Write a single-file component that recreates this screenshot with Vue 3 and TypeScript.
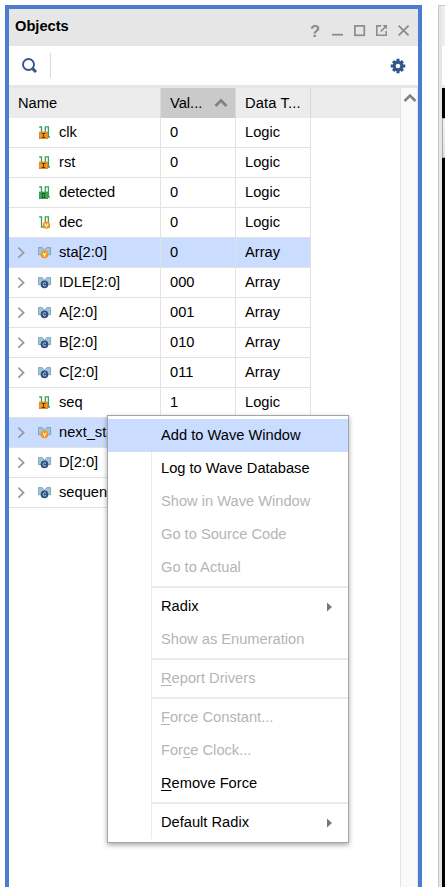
<script setup lang="ts">
type IconKind = 'in' | 'out' | 'wireVar' | 'busVar' | 'busConst'

interface SignalRow {
  name: string
  value: string
  type: string
  icon: IconKind
  selected?: boolean
}

interface MenuItem {
  before?: string
  key?: string
  after: string
  disabled?: boolean
  submenu?: boolean
  active?: boolean
}

const rows: SignalRow[] = [
  { name: 'clk', value: '0', type: 'Logic', icon: 'in' },
  { name: 'rst', value: '0', type: 'Logic', icon: 'in' },
  { name: 'detected', value: '0', type: 'Logic', icon: 'out' },
  { name: 'dec', value: '0', type: 'Logic', icon: 'wireVar' },
  { name: 'sta[2:0]', value: '0', type: 'Array', icon: 'busVar', selected: true },
  { name: 'IDLE[2:0]', value: '000', type: 'Array', icon: 'busConst' },
  { name: 'A[2:0]', value: '001', type: 'Array', icon: 'busConst' },
  { name: 'B[2:0]', value: '010', type: 'Array', icon: 'busConst' },
  { name: 'C[2:0]', value: '011', type: 'Array', icon: 'busConst' },
  { name: 'seq', value: '1', type: 'Logic', icon: 'in' },
  { name: 'next_sta', value: '', type: '', icon: 'busVar', selected: true },
  { name: 'D[2:0]', value: '', type: '', icon: 'busConst' },
  { name: 'sequen', value: '', type: '', icon: 'busConst' },
]

const menuGroups: MenuItem[][] = [
  [
    { after: 'Add to Wave Window', active: true },
    { after: 'Log to Wave Database' },
    { after: 'Show in Wave Window', disabled: true },
    { after: 'Go to Source Code', disabled: true },
    { after: 'Go to Actual', disabled: true },
  ],
  [
    { after: 'Radix', submenu: true },
    { after: 'Show as Enumeration', disabled: true },
  ],
  [{ key: 'R', after: 'eport Drivers', disabled: true }],
  [
    { key: 'F', after: 'orce Constant...', disabled: true },
    { before: 'For', key: 'c', after: 'e Clock...', disabled: true },
    { key: 'R', after: 'emove Force' },
  ],
  [{ after: 'Default Radix', submenu: true }],
]

const isBus = (icon: IconKind): boolean => icon === 'busVar' || icon === 'busConst'
</script>

<template>
  <div class="screen">
    <section class="panel">
      <header class="titlebar">
        <h1 class="title">Objects</h1>
        <div class="window-buttons">
          <span class="help">?</span>
          <svg width="12" height="14" viewBox="0 0 12 14"><path d="M0 11.7H11" stroke="#8c8c8c" stroke-width="1.8" /></svg>
          <svg width="12" height="14" viewBox="0 0 12 14"><rect x="0.9" y="2.9" width="9.4" height="9.4" fill="none" stroke="#8c8c8c" stroke-width="1.7" /></svg>
          <svg width="12" height="14" viewBox="0 0 12 14" fill="none" stroke="#8c8c8c" stroke-width="1.6"><path d="M5.2 2.9H0.8V12.3H10.2V8M4.8 8.4L9 4.2" /><path d="M6.5 2.1H11V6.6Z" fill="#8c8c8c" stroke="none" /></svg>
          <svg width="12" height="14" viewBox="0 0 12 14"><path d="M0.6 2.6L10.6 12.4M10.6 2.6L0.6 12.4" stroke="#8c8c8c" stroke-width="1.8" /></svg>
        </div>
      </header>

      <div class="toolbar">
        <svg class="search" width="16" height="16" viewBox="0 0 16 16" fill="none" stroke="#33548c">
          <circle cx="6.5" cy="6.5" r="5.5" stroke-width="1.9" />
          <path d="M10.6 10.6L14 14" stroke-width="3" />
        </svg>
        <span class="divider"></span>
        <svg class="gear" width="16" height="16" viewBox="-8 -8 16 16">
          <g stroke="#33548c" stroke-width="3.1">
            <path d="M0-7.3V7.3M-7.3 0H7.3" />
            <path d="M-4.9-4.9L4.9 4.9M4.9-4.9L-4.9 4.9" />
          </g>
          <circle r="5.4" fill="#33548c" />
          <circle r="2.3" fill="#fff" />
        </svg>
      </div>

      <div class="content">
        <div class="table">
          <div class="head">
            <div class="cell name-col">Name</div>
            <div class="cell value-col sorted">
              <span>Val...</span>
              <svg width="14" height="10" viewBox="0 0 14 10"><path d="M1.5 8L7 2.5L12.5 8" fill="none" stroke="#828282" stroke-width="2.7" /></svg>
            </div>
            <div class="cell type-col type-head">Data T...</div>
          </div>
          <div v-for="row in rows" :key="row.name" class="row" :class="{ selected: row.selected }">
            <div class="cell name-col">
              <span class="expander">
                <svg v-if="isBus(row.icon)" width="9" height="14" viewBox="0 0 9 14"><path d="M0.3 2.7L5.6 7.7L0.3 12.7" fill="none" stroke="#999" stroke-width="1.7" /></svg>
              </span>
              <svg class="kind" width="14" height="14" viewBox="0 0 14 14">
                <template v-if="isBus(row.icon)">
                  <path d="M0.4 2.6H4L6.5 5L9 2.6H12.6V9.7H0.4Z" fill="#9fc5d6" stroke="#7498a8" stroke-width="0.8" />
                  <circle cx="6.5" cy="9.4" r="3.8" :fill="row.icon === 'busVar' ? '#f2951d' : '#2f4f82'" />
                  <path v-if="row.icon === 'busVar'" d="M5 7.7L6.5 10.8L8 7.7" fill="none" stroke="#fff0d0" stroke-width="1.2" />
                  <path v-else d="M8 8.4C6.5 7 5.1 8 5.1 9.4C5.1 10.9 6.7 11.7 8 10.5" fill="none" stroke="#c1d0e6" stroke-width="1" />
                </template>
                <template v-else>
                  <path d="M1.2 2H3.5V12H7.3V1.8H10.4V12H12" fill="none" stroke="#35a455" stroke-width="1.3" />
                  <template v-if="row.icon === 'wireVar'">
                    <circle cx="8.4" cy="10.2" r="3.6" fill="#f2951d" />
                    <path d="M6.9 8.6L8.4 11.5L9.9 8.6" fill="none" stroke="#fff0d0" stroke-width="1.2" />
                  </template>
                  <template v-else>
                    <rect x="1.3" y="7" width="8.4" height="6.7" :fill="row.icon === 'in' ? '#f2951d' : '#45ad4f'" :stroke="row.icon === 'in' ? '#c97b1c' : '#258037'" stroke-width="0.6" />
                    <path v-if="row.icon === 'in'" d="M3.7 8.5H7.3M5.5 8.5V12.5M3.7 12.5H7.3" stroke="#5b3b13" stroke-width="1" />
                    <rect v-else x="4.2" y="8.5" width="2.6" height="3.9" fill="none" stroke="#164f24" stroke-width="1" />
                  </template>
                </template>
              </svg>
              <span>{{ row.name }}</span>
            </div>
            <div class="cell value-col">{{ row.value }}</div>
            <div class="cell type-col">{{ row.type }}</div>
          </div>
        </div>
        <div class="scrollbar">
          <svg width="14" height="10" viewBox="0 0 14 10"><path d="M1.5 8L7 2.5L12.5 8" fill="none" stroke="#828282" stroke-width="2.5" /></svg>
        </div>
      </div>
    </section>

    <aside class="neighbor">
      <div class="n-title"></div>
      <div class="n-tools"></div>
      <div class="n-dark"></div>
      <div class="n-button"></div>
      <div class="n-wave"></div>
    </aside>

    <nav class="menu">
      <div v-for="(group, g) in menuGroups" :key="g" class="group">
        <div v-for="item in group" :key="item.after" class="item" :class="{ active: item.active, disabled: item.disabled }">
          <span class="label">{{ item.before }}<u v-if="item.key">{{ item.key }}</u>{{ item.after }}</span>
          <svg v-if="item.submenu" width="6" height="10" viewBox="0 0 6 10"><path d="M0 0.5L5 5L0 9.5Z" fill="#787878" /></svg>
        </div>
      </div>
    </nav>
  </div>
</template>

<style>
body {
  margin: 0;
  background: #fff;
  overflow: hidden;
}
</style>

<style scoped>
* {
  box-sizing: border-box;
}

.screen {
  position: relative;
  display: flex;
  justify-content: space-between;
  width: 445px;
  height: 887px;
  padding: 5px 0 0 5px;
  overflow: hidden;
  background: #fff;
  color: #000;
  font: 14.67px/20px "Liberation Sans", Arial, sans-serif;
}

svg {
  display: block;
  flex: none;
}

.panel {
  display: flex;
  flex-direction: column;
  width: 417px;
  height: 882px;
  border: 4px solid #4a7dcf;
  border-bottom: 0;
}

.titlebar {
  display: flex;
  justify-content: space-between;
  height: 37px;
  padding: 7px 8px 0 6px;
  background: #e6e6e6;
}

.title {
  margin: 0;
  font-size: 14.67px;
  line-height: 20px;
}

.window-buttons {
  display: flex;
  gap: 10px;
  padding-top: 7px;
}

.help {
  width: 12px;
  color: #8c8c8c;
  font-size: 16.5px;
  font-weight: bold;
  line-height: 16px;
}

.toolbar {
  display: flex;
  align-items: center;
  height: 39px;
  padding: 0 12px 0 13px;
}

.divider {
  width: 1px;
  height: 25px;
  margin-left: 12px;
  background: #d9d9d9;
}

.gear {
  margin-left: auto;
}

.content {
  display: flex;
  flex: 1;
  border-top: 3px solid #e6e6e6;
}

.table {
  flex: 1;
}

.head,
.row {
  display: flex;
  height: 30px;
}

.head {
  background: #ececec;
}

.cell {
  display: flex;
  align-items: center;
  height: 30px;
  padding: 0 0 1px 9px;
  border-right: 1px solid #e2e2e2;
  border-bottom: 1px solid #e2e2e2;
  white-space: nowrap;
}

.head .cell {
  padding-bottom: 0;
  border-bottom: 0;
  border-right-color: #dadada;
}

.name-col {
  width: 152px;
}

.value-col,
.type-col {
  width: 75px;
}

.type-head {
  letter-spacing: 0.15px;
}

.sorted {
  justify-content: space-between;
  padding-right: 7px;
  background: #cacaca;
}

.selected .cell {
  background: #cadcff;
}

.expander {
  width: 20px;
}

.kind {
  margin-right: 7px;
}

.scrollbar {
  width: 18px;
  padding: 5px 0 0 2px;
  border-left: 1px solid #e4e4e4;
  border-right: 1px solid #e4e4e4;
  background: #fafafa;
}

.neighbor {
  display: flex;
  flex-direction: column;
  width: 7px;
  border-left: 1px solid #c9c9c9;
  border-top: 1px solid #c9c9c9;
  padding-left: 3px;
  background: #e6e6e6;
}

.n-title {
  height: 40px;
  background: #efefef;
}

.n-tools {
  height: 39px;
  margin-bottom: 3px;
  background: #fff;
}

.n-dark {
  height: 30px;
  background: #000;
}

.n-button {
  height: 40px;
  border: 1px solid #aaa;
  border-right: 0;
  background: linear-gradient(#f5f5f5, #dedede);
}

.n-wave {
  flex: 1;
  background: #000;
}

.menu {
  position: absolute;
  left: 107px;
  top: 415px;
  width: 242px;
  height: 428px;
  padding: 3px 0 2px;
  border: 1px solid #a5a5a5;
  background: #fff;
  box-shadow: 0 2px 5px rgba(0, 0, 0, 0.35);
}

.group + .group::before {
  content: "";
  display: block;
  height: 6px;
  margin-left: 43px;
  border-left: 1px solid #ececec;
  background: linear-gradient(#fff 2px, #ebebeb 2px, #ebebeb 4px, #fff 4px);
}

.item {
  display: flex;
  align-items: center;
  height: 33px;
  padding-right: 15px;
}

.label {
  flex: 1;
  height: 33px;
  margin-left: 43px;
  padding-left: 9px;
  border-left: 1px solid #ececec;
  line-height: 32px;
}

.active {
  background: #cadcff;
}

.active .label {
  border-left-color: transparent;
}

.disabled {
  color: #b5b5b5;
}

u {
  text-underline-offset: 2px;
  text-decoration-thickness: 1px;
}
</style>
